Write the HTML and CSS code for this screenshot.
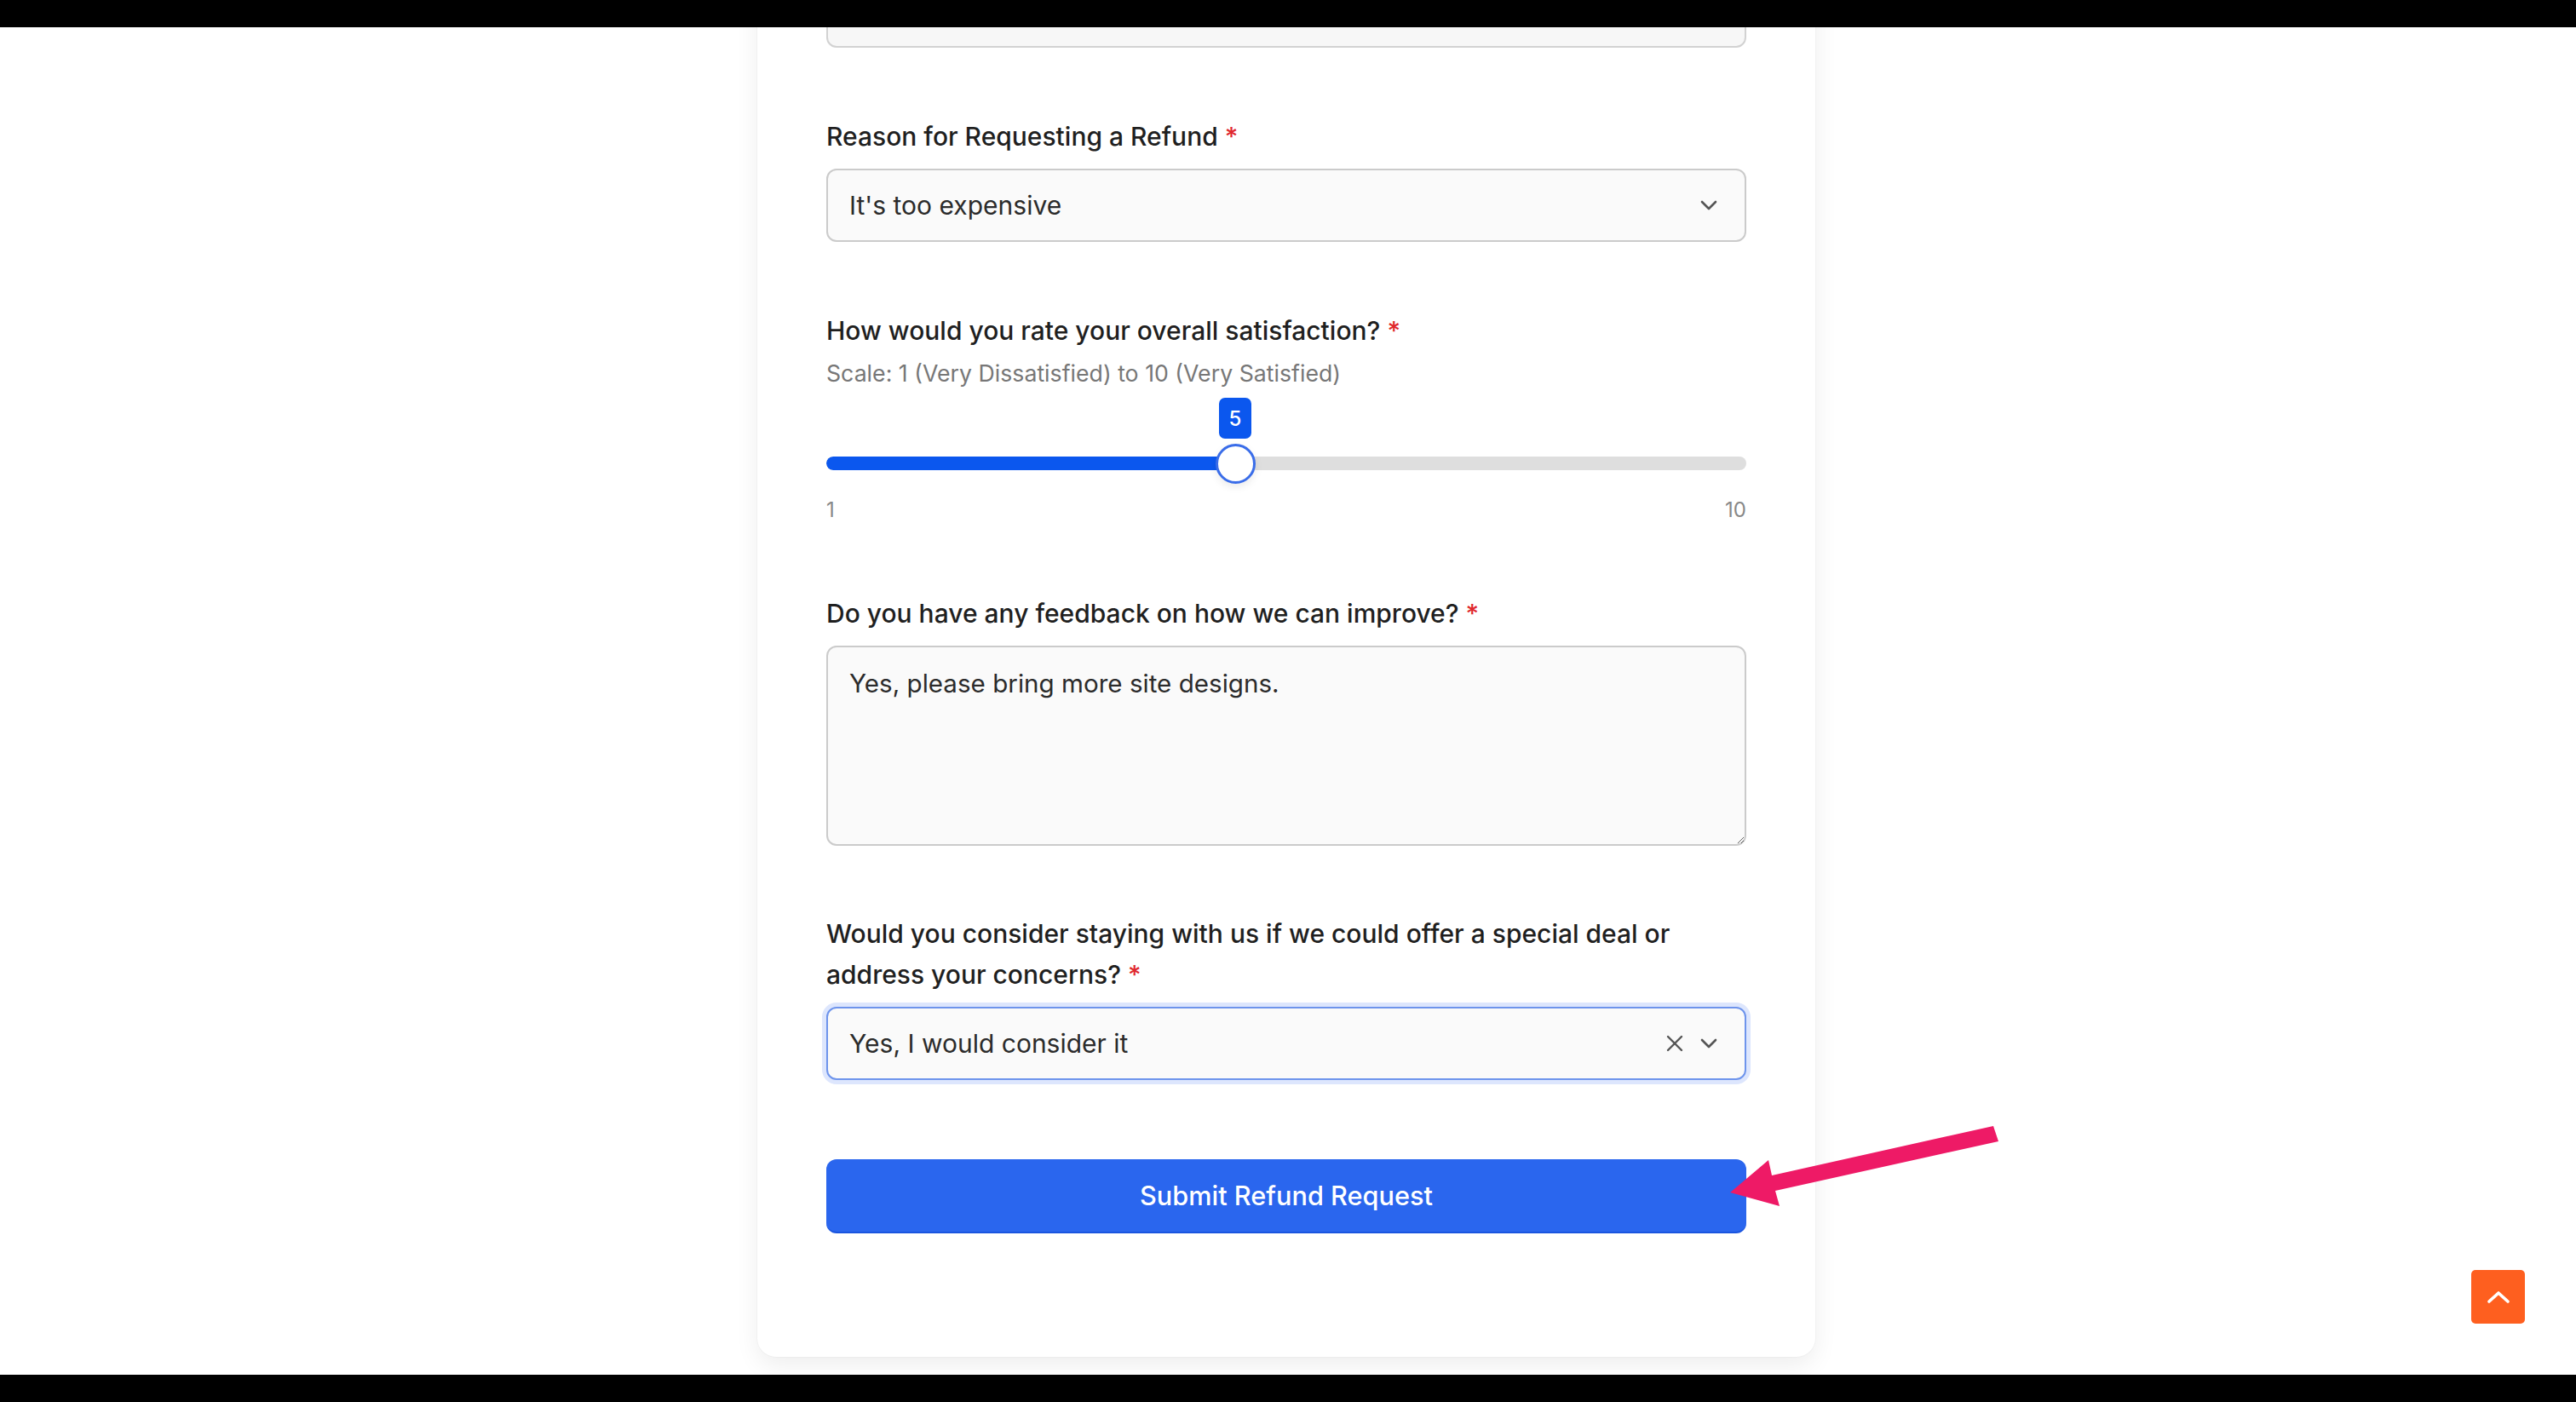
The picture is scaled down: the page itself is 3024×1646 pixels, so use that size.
FILE: index.html
```html
<!DOCTYPE html>
<html lang="en">
<head>
<meta charset="utf-8">
<title>Refund Request</title>
<link rel="stylesheet" href="styles.css">
</head>
<body>
<div class="bar"></div>
<main class="viewport">
  <form class="card">
    <div class="input input-partial"></div>

    <div class="field">
      <label class="label">Reason for Requesting a Refund <span class="req">*</span></label>
      <div class="select">
        <span class="select-value">It's too expensive</span>
        <span class="select-icons">
          <svg class="chev" viewBox="0 0 20 12" width="20" height="12"><polyline points="2,2 10,10 18,2"/></svg>
        </span>
      </div>
    </div>

    <div class="field">
      <label class="label">How would you rate your overall satisfaction? <span class="req">*</span></label>
      <div class="hint">Scale: 1 (Very Dissatisfied) to 10 (Very Satisfied)</div>
      <div class="range">
        <div class="track"><div class="fill" style="width:44.444%"></div></div>
        <div class="badge" style="left:44.444%">5</div>
        <div class="thumb" style="left:44.444%"></div>
      </div>
      <div class="range-ends"><span>1</span><span>10</span></div>
    </div>

    <div class="field">
      <label class="label">Do you have any feedback on how we can improve? <span class="req">*</span></label>
      <textarea class="textarea">Yes, please bring more site designs.</textarea>
    </div>

    <div class="field">
      <label class="label">Would you consider staying with us if we could offer a special deal or<br>address your concerns? <span class="req">*</span></label>
      <div class="select select-focus">
        <span class="select-value">Yes, I would consider it</span>
        <span class="select-icons">
          <svg class="clear" viewBox="0 0 20 20" width="20" height="20"><line x1="2" y1="2" x2="18" y2="18"/><line x1="18" y1="2" x2="2" y2="18"/></svg>
          <svg class="chev" viewBox="0 0 20 12" width="20" height="12"><polyline points="2,2 10,10 18,2"/></svg>
        </span>
      </div>
    </div>

    <button type="button" class="submit">Submit Refund Request</button>
  </form>

  <svg class="annotation" viewBox="0 0 360 140" width="360" height="140">
    <polygon points="31,100 76,62 80,80 340,22 346,40 84,98 89,116"/>
  </svg>

  <a class="to-top" href="#">
    <svg viewBox="0 0 28 16" width="28" height="16"><polyline points="3,13 14,3 25,13"/></svg>
  </a>
</main>
<div class="bar"></div>
</body>
</html>
```

FILE: styles.css
```css
* { box-sizing: border-box; }

html, body {
  margin: 0;
  padding: 0;
  background: #000;
}

body {
  font-family: "Inter", "Noto Sans", "Liberation Sans", sans-serif;
  color: #222;
}

.bar {
  height: 32px;
  background: #000;
}

.viewport {
  position: relative;
  height: 1582px;
  overflow: hidden;
  background: #fff;
}

.card {
  width: 1242px;
  margin: -62px 0 0 calc(50% - 623px);
  padding: 0 81px 145px;
  background: #fff;
  border-radius: 0 0 22px 22px;
  box-shadow: 0 0 0 1px rgba(0, 0, 0, 0.025), 0 10px 28px rgba(0, 0, 0, 0.07);
  display: flex;
  flex-direction: column;
}

.input {
  height: 86px;
  border: 2px solid #d2d2d2;
  border-radius: 12px;
  background: #f7f7f7;
}

.field {
  display: flex;
  flex-direction: column;
  margin-top: 80px;
}

.label {
  font-size: 30px;
  line-height: 48px;
  font-weight: 500;
  color: #1f1f1f;
  margin-bottom: 14px;
}

.req { color: #e0282e; }

.select {
  height: 86px;
  border: 2px solid #cbcbcb;
  border-radius: 12px;
  background: #fafafa;
  display: flex;
  align-items: center;
  justify-content: space-between;
  padding: 0 32px 0 25px;
  font-size: 30px;
  color: #2b2b2b;
}

.select-focus {
  border-color: #6e94ec;
  box-shadow: 0 0 0 5px #dde6fd;
}

.select-icons {
  display: flex;
  align-items: center;
  gap: 20px;
}

.chev polyline {
  fill: none;
  stroke: #555;
  stroke-width: 2.6;
  stroke-linecap: round;
  stroke-linejoin: round;
}

.clear line {
  stroke: #555;
  stroke-width: 2.4;
  stroke-linecap: round;
}

.hint {
  font-size: 26.7px;
  line-height: 40px;
  color: #777;
  margin-top: -8px;
}

.range {
  position: relative;
  height: 117px;
  padding-top: 78px;
}

.track {
  height: 16px;
  border-radius: 8px;
  background: #dedede;
  overflow: hidden;
}

.fill {
  height: 100%;
  background: #0b57ee;
  border-radius: 8px 0 0 8px;
}

.badge {
  position: absolute;
  top: 9px;
  width: 38px;
  height: 48px;
  margin-left: -19px;
  border-radius: 7px;
  background: #0b57ee;
  color: #fff;
  font-size: 24px;
  font-weight: 500;
  display: flex;
  align-items: center;
  justify-content: center;
}

.thumb {
  position: absolute;
  top: 63px;
  width: 47px;
  height: 47px;
  margin-left: -23px;
  border-radius: 50%;
  background: #fff;
  border: 3px solid #3a6de9;
  box-shadow: 0 4px 10px rgba(0, 0, 0, 0.08);
}

.range-ends {
  display: flex;
  justify-content: space-between;
  font-size: 24px;
  line-height: 34px;
  color: #888;
  margin-top: 7px;
}

.textarea {
  height: 235px;
  border: 2px solid #cbcbcb;
  border-radius: 12px;
  background: #fafafa;
  font-family: inherit;
  font-size: 29.6px;
  line-height: 48px;
  color: #2b2b2b;
  padding: 18px 25px;
  resize: vertical;
  outline: none;
  margin-bottom: -1px;
}

.submit {
  margin-top: 93px;
  height: 87px;
  border: none;
  border-bottom: 2px solid #1a55df;
  border-radius: 12px;
  background: #2a66ee;
  color: #fff;
  font-family: inherit;
  font-size: 30.7px;
  font-weight: 500;
}

.annotation {
  position: absolute;
  left: 2000px;
  top: 1268px;
}

.annotation polygon { fill: #ee1a66; }

.to-top {
  position: absolute;
  right: 60px;
  bottom: 60px;
  width: 63px;
  height: 63px;
  border-radius: 5px;
  background: #fe5f1f;
  display: flex;
  align-items: center;
  justify-content: center;
}

.to-top polyline {
  fill: none;
  stroke: #fff;
  stroke-width: 3.6;
  stroke-linecap: round;
  stroke-linejoin: round;
}
```
